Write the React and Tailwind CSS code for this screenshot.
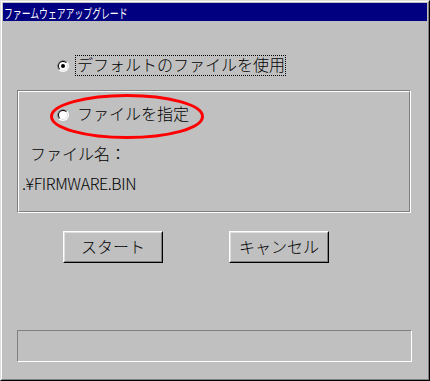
import React from "react";

const FONT = { fontFamily: '"Noto Sans CJK JP", "Noto Sans", sans-serif' };

function Radio({ checked }) {
  return (
    <svg width="12" height="12" viewBox="0 0 12 12" className="shrink-0">
      <circle cx="6" cy="6" r="6" fill="#ffffff" />
      <path d="M 1.757 10.243 A 6 6 0 0 1 10.243 1.757 Z" fill="#808080" />
      <circle cx="6" cy="6" r="5" fill="#dfdfdf" />
      <path d="M 2.464 9.536 A 5 5 0 0 1 9.536 2.464 Z" fill="#000000" />
      <circle cx="6" cy="6" r="4" fill="#ffffff" />
      {checked && <circle cx="6" cy="6" r="2" fill="#000000" />}
    </svg>
  );
}

function Button({ children }) {
  return (
    <div className="w-[100px] h-[32px] border border-t-white border-l-white border-r-black border-b-black bg-[#c0c0c0]">
      <div className="w-full h-full border border-t-[#dfdfdf] border-l-[#dfdfdf] border-r-[#808080] border-b-[#808080] flex items-center justify-center pb-[3px] text-[16px] leading-none text-black">
        {children}
      </div>
    </div>
  );
}

export default function App() {
  return (
    <div style={FONT} className="w-[430px] h-[381px] bg-[#c0c0c0] font-light">
      <div className="w-full h-full border border-t-[#dfdfdf] border-l-[#dfdfdf] border-r-black border-b-black">
        <div className="w-full h-full border border-t-white border-l-white border-r-[#808080] border-b-[#808080] p-px flex flex-col">
          {/* Title bar */}
          <div className="h-[18px] bg-[#000080] flex items-center pl-px overflow-hidden">
            <span className="text-white text-[13px] leading-none whitespace-nowrap origin-left scale-x-[0.68] inline-block font-normal">
              ファームウェアアップグレード
            </span>
          </div>

          {/* Body */}
          <div className="flex flex-col">
            {/* Row 1 */}
            <div className="mt-[34px] ml-[54px] h-[21px] flex items-center">
              <Radio checked />
              <div className="ml-[6px] w-[211px] h-[21px] border border-dotted border-black flex items-center pl-px pb-[3px] text-[16px] leading-none text-black whitespace-nowrap">
                デフォルトのファイルを使用
              </div>
            </div>

            {/* Group box */}
            <div className="relative mt-[14px] ml-[14px] w-[394px] h-[123px] border border-t-[#808080] border-l-[#808080] border-r-white border-b-white">
              <div className="w-full h-full border border-t-white border-l-white border-r-[#808080] border-b-[#808080] flex flex-col">
                <div className="mt-[12px] ml-[38px] h-[21px] flex items-center">
                  <Radio />
                  <div className="ml-[8px] pb-[3px] text-[16px] leading-none text-black whitespace-nowrap">
                    ファイルを指定
                  </div>
                </div>
                <div className="mt-[19px] ml-[11px] h-[21px] pb-[3px] flex items-center text-[16px] leading-none text-black whitespace-nowrap">
                  ファイル名：
                </div>
                <div className="mt-[9px] ml-[3px] h-[21px] pb-[3px] flex items-center text-[16px] leading-none text-black whitespace-nowrap tracking-[-0.4px]">
                  .¥FIRMWARE.BIN
                </div>
              </div>
              {/* red annotation ellipse */}
              <svg
                className="absolute left-[32px] top-[3px] pointer-events-none"
                width="154"
                height="45"
                viewBox="0 0 154 45"
              >
                <ellipse cx="77" cy="22.5" rx="75.5" ry="21" fill="none" stroke="#ff0000" strokeWidth="3" />
              </svg>
            </div>

            {/* Buttons */}
            <div className="mt-[18px] ml-[60px] flex gap-[66px]">
              <Button>スタート</Button>
              <Button>キャンセル</Button>
            </div>

            {/* Status panel */}
            <div className="mt-[67px] ml-[14px] w-[395px] h-[32px] border border-t-[#808080] border-l-[#808080] border-r-white border-b-white" />
          </div>
        </div>
      </div>
    </div>
  );
}
